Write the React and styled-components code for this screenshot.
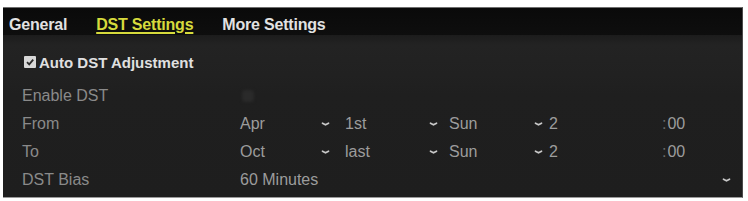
import React from "react";
import styled, { createGlobalStyle } from "styled-components";

const Global = createGlobalStyle`
  html, body { margin: 0; padding: 0; background: #ffffff; }
  body { font-family: "Liberation Sans", Arial, sans-serif; }
`;

const Page = styled.div`
  width: 748px;
  height: 201px;
  padding: 7px 5px 0 3px;
  box-sizing: border-box;
  background: #ffffff;
`;

const Panel = styled.div`
  width: 740px;
  height: 191px;
  box-sizing: border-box;
  border-top: 1px solid #6e6e6e;
  border-right: 1px solid #4a4a4a;
  border-bottom: 1px solid #9a9a9a;
  background: #1e1e1e;
  display: flex;
  flex-direction: column;
`;

const TabBar = styled.div`
  height: 27px;
  box-sizing: border-box;
  background: linear-gradient(#0a0a0a, #0e0e0e);
  display: flex;
  align-items: flex-start;
  padding: 8px 0 0 6px;
  gap: 29px;
`;

const Tab = styled.div`
  font-size: 16px;
  line-height: 18px;
  font-weight: bold;
  color: ${(p) => (p.$active ? "#d6da3c" : "#e2e2e2")};
  text-decoration: ${(p) => (p.$active ? "underline" : "none")};
  text-decoration-thickness: 2px;
  text-underline-offset: 2px;
  letter-spacing: -0.2px;
`;

const Content = styled.div`
  flex: 1;
  display: flex;
  flex-direction: column;
  background: linear-gradient(#1c1c1c 0px, #232323 10px, #212121 40px, #1f1f1f 60px, #1e1e1e 100%);
`;

const AutoRow = styled.div`
  display: flex;
  align-items: center;
  height: 18px;
  padding: 18px 0 11px 21px;
  gap: 3px;
  font-size: 15px;
  font-weight: bold;
  color: #e0e0e0;
`;

const CheckBox = styled.span`
  width: 12px;
  height: 12px;
  box-sizing: border-box;
  background: ${(p) => (p.$disabled ? "#2a2a2a" : "#d8d8d8")};
  border-radius: ${(p) => (p.$disabled ? "4px" : "1px")};
  margin-left: ${(p) => p.$ml || 0}px;
  display: inline-flex;
  align-items: center;
  justify-content: center;
  filter: ${(p) => (p.$disabled ? "blur(1.5px)" : "none")};
`;

const Row = styled.div`
  height: 28px;
  display: flex;
  align-items: center;
  padding-left: 19px;
  font-size: 16px;
  color: #8a8a8a;
`;

const Label = styled.div`
  width: 218px;
  flex: none;
`;

const Fields = styled.div`
  display: flex;
  align-items: center;
  color: #9c9c9c;
`;

const Select = styled.div`
  width: ${(p) => p.$w}px;
  margin-right: ${(p) => p.$gap || 0}px;
  display: flex;
  align-items: center;
  justify-content: space-between;
  padding-right: ${(p) => p.$pr || 2}px;
  box-sizing: border-box;
`;

const Minute = styled.div`
  display: flex;
  align-items: center;
  margin-left: 15px;
`;

const Colon = styled.span`
  color: #6a6a6a;
  margin-right: 1px;
`;

const Arrow = () => (
  <svg width="9" height="6" viewBox="0 0 9 6">
    <path d="M1.5 2.2 L4.5 3.8 L7.5 2.2" fill="none" stroke="#c8c8c8" strokeWidth="1.7" strokeLinecap="round" />
  </svg>
);

const Check = () => (
  <svg width="10" height="10" viewBox="0 0 10 10">
    <path d="M2 5.2 L4.2 7.4 L8.2 2.6" fill="none" stroke="#2a2a2a" strokeWidth="1.8" />
  </svg>
);

const DateFields = ({ month, week, day, hour }) => (
  <Fields>
    <Select $w={92} $gap={13}>
      <span>{month}</span>
      <Arrow />
    </Select>
    <Select $w={95} $gap={9}>
      <span>{week}</span>
      <Arrow />
    </Select>
    <Select $w={96} $gap={4}>
      <span>{day}</span>
      <Arrow />
    </Select>
    <Select $w={98}>
      <span>{hour}</span>
    </Select>
    <Minute>
      <Colon>:</Colon>
      <span>00</span>
    </Minute>
  </Fields>
);

export default function App() {
  return (
    <>
      <Global />
      <Page>
        <Panel>
          <TabBar>
            <Tab>General</Tab>
            <Tab $active>DST Settings</Tab>
            <Tab>More Settings</Tab>
          </TabBar>
          <Content>
            <AutoRow>
              <CheckBox>
                <Check />
              </CheckBox>
              <span>Auto DST Adjustment</span>
            </AutoRow>
            <Row>
              <Label>Enable DST</Label>
              <Fields>
                <CheckBox $disabled $ml={2} />
              </Fields>
            </Row>
            <Row>
              <Label>From</Label>
              <DateFields month="Apr" week="1st" day="Sun" hour="2" />
            </Row>
            <Row>
              <Label>To</Label>
              <DateFields month="Oct" week="last" day="Sun" hour="2" />
            </Row>
            <Row>
              <Label>DST Bias</Label>
              <Fields>
                <Select $w={496} $pr={5}>
                  <span>60 Minutes</span>
                  <Arrow />
                </Select>
              </Fields>
            </Row>
          </Content>
        </Panel>
      </Page>
    </>
  );
}
